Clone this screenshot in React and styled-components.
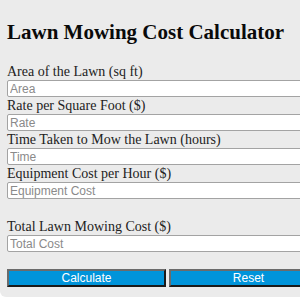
import React from "react";
import styled, { createGlobalStyle } from "styled-components";

const Global = createGlobalStyle`
  html, body {
    margin: 0;
    padding: 0;
    background: #ffffff;
    overflow: hidden;
  }
`;

const Card = styled.div`
  width: 335px;
  box-sizing: border-box;
  background: #ebebeb;
  border-radius: 0 0 6px 6px;
  padding: 20px 7px 10px 7px;
  font-family: "Liberation Serif", "Times New Roman", serif;
  color: #111;
`;

const Title = styled.h2`
  margin: 0 0 19px 0;
  font-size: 21px;
  line-height: 24px;
  font-weight: bold;
  color: #0a0a0a;
  white-space: nowrap;
`;

const Field = styled.div`
  display: flex;
  flex-direction: column;
  margin-top: ${(p) => (p.$gap ? "19px" : "0")};
`;

const Label = styled.label`
  font-size: 14px;
  line-height: 17px;
  color: #222;
  white-space: nowrap;
`;

const Input = styled.input`
  box-sizing: border-box;
  width: 100%;
  height: 17px;
  margin: 0;
  padding: 0 2px;
  border: 1px solid #a3a3a3;
  border-radius: 2px;
  background: #fff;
  font-family: "Liberation Sans", Arial, sans-serif;
  font-size: 12px;
  color: #333;
  outline: none;
  &::placeholder {
    color: #8a8a8a;
  }
`;

const Buttons = styled.div`
  display: grid;
  grid-template-columns: 1fr 1fr;
  gap: 3px;
  margin-top: 17px;
`;

const Button = styled.button`
  box-sizing: border-box;
  height: 18px;
  margin: 0;
  padding: 0;
  background: #0094da;
  color: #fff;
  font-family: "Liberation Sans", Arial, sans-serif;
  font-size: 12px;
  line-height: 14px;
  border: 2px solid;
  border-color: #6b6b6b #1a1a1a #1a1a1a #6b6b6b;
  cursor: pointer;
`;

const fields = [
  { label: "Area of the Lawn (sq ft)", ph: "Area" },
  { label: "Rate per Square Foot ($)", ph: "Rate" },
  { label: "Time Taken to Mow the Lawn (hours)", ph: "Time" },
  { label: "Equipment Cost per Hour ($)", ph: "Equipment Cost" },
];

export default function App() {
  return (
    <>
      <Global />
      <Card>
        <Title>Lawn Mowing Cost Calculator</Title>
        {fields.map((f) => (
          <Field key={f.ph}>
            <Label>{f.label}</Label>
            <Input placeholder={f.ph} />
          </Field>
        ))}
        <Field $gap>
          <Label>Total Lawn Mowing Cost ($)</Label>
          <Input placeholder="Total Cost" readOnly />
        </Field>
        <Buttons>
          <Button>Calculate</Button>
          <Button>Reset</Button>
        </Buttons>
      </Card>
    </>
  );
}
